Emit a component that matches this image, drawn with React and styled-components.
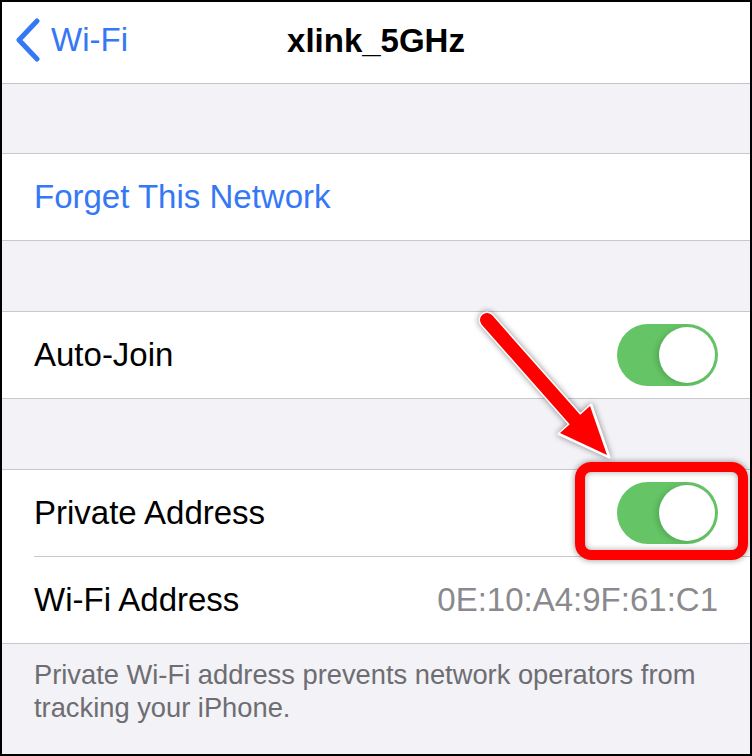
import React from 'react';
import styled, { createGlobalStyle } from 'styled-components';

const GlobalStyle = createGlobalStyle`
  html, body {
    margin: 0;
    padding: 0;
    background: #fff;
  }
  * {
    box-sizing: border-box;
  }
`;

// Page frame
const Frame = styled.div`
  position: relative;
  width: 752px;
  height: 756px;
  border: 2px solid #000;
  background: #f2f2f7;
  overflow: hidden;
  font-family: "Liberation Sans", Arial, sans-serif;
`;

const NavBar = styled.div`
  height: 82px;
  background: #fff;
  border-bottom: 1px solid #c4c4c8;
  display: grid;
  grid-template-columns: 1fr auto 1fr;
  align-items: center;
  padding: 0 13px;
`;

const BackButton = styled.div`
  display: flex;
  align-items: center;
  gap: 10px;
  color: #3478f6;
  font-size: 33px;
  margin-top: -6px;
`;

const Title = styled.div`
  font-size: 33px;
  font-weight: bold;
  color: #000;
  margin-top: -3px;
`;

const Spacer = styled.div`
  height: ${(p) => p.$h || 70}px;
`;

const Group = styled.div`
  background: #fff;
  border-top: 1px solid #c8c7cc;
  border-bottom: 1px solid #c8c7cc;
`;

const Row = styled.div`
  padding-left: 32px;
`;

const RowInner = styled.div`
  height: ${(p) => (p.$divider ? 87 : 86)}px;
  padding-right: 32px;
  display: flex;
  align-items: center;
  justify-content: space-between;
  border-bottom: ${(p) => (p.$divider ? '1px solid #c8c7cc' : 'none')};
`;

const Label = styled.span`
  font-size: 33px;
  color: ${(p) => (p.$link ? '#3478f6' : '#000')};
`;

const Value = styled.span`
  font-size: 33px;
  color: #8a8a8e;
`;

const Toggle = styled.div`
  position: relative;
  width: 101px;
  height: 62px;
  border-radius: 31px;
  background: #65c466;
`;

const Knob = styled.div`
  position: absolute;
  top: 3px;
  right: 3px;
  width: 56px;
  height: 56px;
  border-radius: 50%;
  background: #fff;
  box-shadow: -3px 1px 5px rgba(0, 60, 0, 0.18);
`;

const Footer = styled.div`
  padding: 14px 32px 0;
  font-size: 27.3px;
  line-height: 33px;
  color: #6d6d72;
`;

// Annotation overlays
const Highlight = styled.div`
  position: absolute;
  left: 573px;
  top: 460px;
  width: 173px;
  height: 98px;
  border: 10px solid #ff0000;
  border-radius: 16px;
  box-shadow: 0 0 6px rgba(0, 0, 0, 0.45), inset 0 0 6px rgba(0, 0, 0, 0.35);
`;

const Arrow = styled.svg`
  position: absolute;
  left: 468px;
  top: 298px;
  overflow: visible;
  filter: drop-shadow(0 0 3px rgba(0, 0, 0, 0.45));
`;

const Chevron = () => (
  <svg width="26" height="44" viewBox="0 0 26 44">
    <polyline
      points="22,3 4,22 22,41"
      fill="none"
      stroke="#3478f6"
      strokeWidth="5"
      strokeLinecap="round"
      strokeLinejoin="round"
    />
  </svg>
);

const Switch = () => (
  <Toggle>
    <Knob />
  </Toggle>
);

export default function App() {
  return (
    <>
      <GlobalStyle />
      <Frame>
        <NavBar>
          <BackButton>
            <Chevron />
            Wi-Fi
          </BackButton>
          <Title>xlink_5GHz</Title>
          <div />
        </NavBar>

        <Spacer $h={69} />
        <Group>
          <Row>
            <RowInner>
              <Label $link>Forget This Network</Label>
            </RowInner>
          </Row>
        </Group>

        <Spacer />
        <Group>
          <Row>
            <RowInner>
              <Label>Auto-Join</Label>
              <Switch />
            </RowInner>
          </Row>
        </Group>

        <Spacer />
        <Group>
          <Row>
            <RowInner $divider>
              <Label>Private Address</Label>
              <Switch />
            </RowInner>
          </Row>
          <Row>
            <RowInner>
              <Label>Wi-Fi Address</Label>
              <Value>0E:10:A4:9F:61:C1</Value>
            </RowInner>
          </Row>
        </Group>

        <Footer>
          Private Wi-Fi address prevents network operators from tracking your iPhone.
        </Footer>

        <Highlight />
        <Arrow width="160" height="180" viewBox="0 0 160 180">
          <line x1="17" y1="20" x2="108" y2="123" stroke="#fff" strokeWidth="17" strokeLinecap="round" />
          <polygon points="139,157 89,134 121,105" fill="#fff" stroke="#fff" strokeWidth="3" strokeLinejoin="round" />
          <line x1="17" y1="20" x2="108" y2="123" stroke="#ff0000" strokeWidth="14" strokeLinecap="round" />
          <polygon points="137,155 90,133 120,106" fill="#ff0000" />
        </Arrow>
      </Frame>
    </>
  );
}
